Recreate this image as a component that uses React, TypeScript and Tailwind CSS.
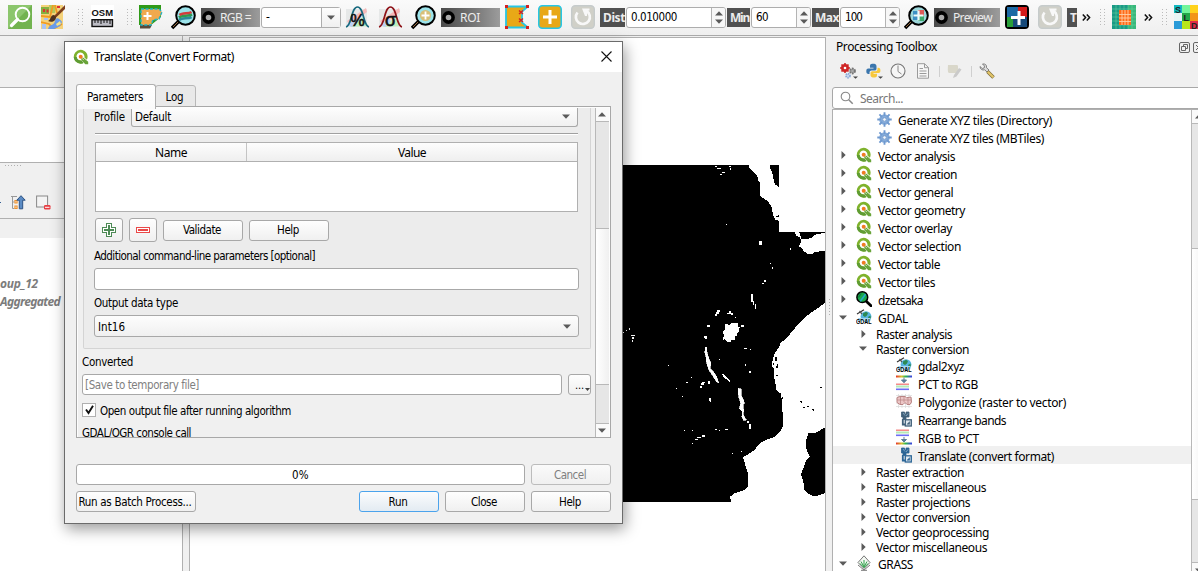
import { useLayoutEffect, useRef, useState, type ReactNode } from "react";

/* Text run spaced to a given advance width. */
function Txt({ w, children, className = "" }: { w: number; children: string; className?: string }) {
  const ref = useRef<HTMLSpanElement>(null);
  const [ls, setLs] = useState(0);
  useLayoutEffect(() => {
    if (ref.current) {
      const natural = ref.current.getBoundingClientRect().width - ls * children.length;
      setLs((w - natural) / children.length);
    }
  }, [w, children]);
  return (
    <span className={`inline-flex shrink-0 translate-y-px self-auto whitespace-pre ${className}`}>
      <span ref={ref} style={{ letterSpacing: ls }} className="inline-block shrink-0">
        {children}
      </span>
    </span>
  );
}

const SEGOE = "font-['Noto_Sans','Open_Sans',sans-serif] text-[12px]";
const TAHOMA = "font-['DejaVu_Sans_Condensed','DejaVu_Sans',sans-serif] text-[11.5px]";

function Down({ className = "" }: { className?: string }) {
  return (
    <svg width="8" height="5" viewBox="0 0 8 5" className={`shrink-0 ${className}`}>
      <path d="M0 .5h8L4 4.7z" fill="#5a5a5a" />
    </svg>
  );
}
function Up({ className = "" }: { className?: string }) {
  return (
    <svg width="8" height="5" viewBox="0 0 8 5" className={`shrink-0 ${className}`}>
      <path d="M0 4.5h8L4 .3z" fill="#5a5a5a" />
    </svg>
  );
}

function Chevrons({ className = "" }: { className?: string }) {
  return (
    <svg width="9" height="7" viewBox="0 0 9 7" className={`shrink-0 ${className}`}>
      <path d="M.8.5l2.800 3-2.800 3M4.800.5l2.800 3-2.800 3" fill="none" stroke="#111" strokeWidth="1.500" />
    </svg>
  );
}

function QIcon({ size = 16 }: { size?: number }) {
  return (
    <svg width={size} height={size} viewBox="0 0 16 16" className="shrink-0">
      <path d="M7.600 .8a6.900 6.900 0 1 0 2.900 13.200L8.400 11.500A4 4 0 1 1 11.400 8.400l2.500 2.300A6.900 6.900 0 0 0 7.600 .8z" fill="#7fb22c" />
      <path d="M.8 8a6.900 6.900 0 0 0 9.700 6L8.400 11.500A4 4 0 0 1 3.700 8z" fill="#5f9c33" />
      <path d="M8.300 8.800h2.200l4.700 4v2.400h-2.900L8.300 11z" fill="#69a43a" />
      <path d="M9 9.200l1.800 1.800" stroke="#d8e8c8" strokeWidth=".9" />
      <circle cx="7.700" cy="7.700" r="2" fill="#f07c22" />
    </svg>
  );
}

function GearIcon() {
  return (
    <svg width="15" height="15" viewBox="0 0 16 16" className="shrink-0">
      <circle cx="8" cy="8" r="3.800" fill="none" stroke="#85abd9" strokeWidth="3.600" />
      <path d="M8 .3v4M8 11.700v4M.3 8h4M11.700 8h4M2.600 2.600l2.800 2.800M10.600 10.600l2.800 2.800M13.400 2.600l-2.800 2.800M5.400 10.600l-2.800 2.800" stroke="#6f99cf" strokeWidth="2" />
      <circle cx="8" cy="8" r="1.900" fill="#f4f8fc" stroke="#5f8ac2" strokeWidth=".8" />
    </svg>
  );
}

function DzIcon() {
  return (
    <svg width="16" height="16" viewBox="0 0 16 16" className="shrink-0">
      <path d="M10.500 10.500L15 14.800" stroke="#000" strokeWidth="2.800" strokeLinecap="round" />
      <circle cx="6.300" cy="6.200" r="5.400" fill="#19a84a" stroke="#000" strokeWidth="1.500" />
      <path d="M3.500 10L9 2.500l1.300 1L5 10.700z" fill="#25a9c8" />
      <path d="M2.400 6.500L5.200 2.400" stroke="#0b7b3c" strokeWidth="1.300" />
    </svg>
  );
}

function GdalIcon() {
  return (
    <svg width="16" height="16" viewBox="0 0 16 16" className="shrink-0">
      <circle cx="10" cy="7.600" r="5.400" fill="#58b5e0" />
      <path d="M7 4.500l3-1.800 2 1.200-1 2.500-2 1.600-2-1.200zM12 8l2.500-1.500.4 3-2 1z" fill="#2d8a54" />
      <path d="M1 5L8 .8" stroke="#333" strokeWidth="1.200" />
      <path d="M3.500 2l2.500 3" stroke="#555" strokeWidth="1.200" />
      <path d="M2 9h12.500v3H2z" fill="#a5d7ee" />
      <text x="0" y="15.300" fontSize="7.500" fontWeight="bold" textLength="15.500" lengthAdjust="spacingAndGlyphs" fontFamily="Liberation Sans, sans-serif" fill="#000">GDAL</text>
    </svg>
  );
}

function PctIcon({ flip = false }: { flip?: boolean }) {
  return (
    <svg width="16" height="16" viewBox="0 0 16 16" className="shrink-0">
      <defs>
        <linearGradient id="rainbow">
          <stop offset="0" stopColor="#e8332a" />
          <stop offset=".35" stopColor="#d8c22c" />
          <stop offset=".6" stopColor="#2eb84a" />
          <stop offset="1" stopColor="#3b3bea" />
        </linearGradient>
      </defs>
      <rect x="0" y={flip ? 13.5 : 0.5} width="16" height="2" fill="url(#rainbow)" />
      <g transform={flip ? "translate(0 -8)" : undefined}>
        <rect y="8.500" width="13" height="1.500" fill="#f58a8a" />
        <rect y="10.500" width="13" height="2" fill="#b6eab6" />
        <rect y="13.500" width="13" height="1.600" fill="#6d6df5" />
      </g>
      <path d={flip ? "M8 8v3M5.500 10.500h5L8 13z" : "M8 2.500v3M5.500 5h5L8 7.800z"} fill="#5b7d99" stroke="#5b7d99" />
    </svg>
  );
}

function PolyIcon() {
  return (
    <svg width="16" height="14" viewBox="0 0 16 14" className="shrink-0">
      <path d="M0 1.500h16M0 5h16M0 9h16M0 12.500h16M2.500 0v14M6 0v14M9.500 0v14M13 0v14" stroke="#d8d8d8" strokeWidth=".7" />
      <path d="M1 3.500l3-1h5l1.500 1.200L15 3l.5 5-1.500 2.500h-3L9 8.500l-2 2H4L1 8.500z" fill="#ecc6c6" stroke="#b98484" strokeWidth="1" />
      <path d="M4.500 3v7M8 3v5M12 3.500v6.500M1 6h14" stroke="#b98484" strokeWidth=".7" />
    </svg>
  );
}

function TransIcon({ c = "#416079" }: { c?: string }) {
  return (
    <svg width="16" height="16" viewBox="0 0 16 16" className="shrink-0">
      <path d="M5.500 1h3v2h1.500v-2h3v5h-3v2.500h-3V6h-1.500z" fill={c} stroke={c} strokeWidth=".8" />
      <path d="M7 2l2 2.500M10 5l2-2.500" stroke="#8fb2cc" strokeWidth=".8" />
      <path d="M6.800 8v5.500h2.200" fill="none" stroke={c} strokeWidth="1.800" />
      <rect x="9.300" y="8.800" width="6" height="6.200" fill="#dfe8ef" stroke={c} strokeWidth="1.300" />
      <path d="M11 13.300l2.700-2.700v2.700z" fill={c} stroke={c} strokeWidth=".5" />
    </svg>
  );
}

function GrassIcon() {
  return (
    <svg width="14" height="16" viewBox="0 0 14 16" className="shrink-0">
      <path d="M7 .8L13 7.500 7 13.500 1 7.500z" fill="#f3f8f2" stroke="#777" strokeWidth="1" />
      <path d="M7 13V5M7 12L4 6.500M7 12l3-5.500M6.500 12L2.800 8.500M7.500 12l3.800-3.500" stroke="#2fa04a" strokeWidth="1" />
      <path d="M1 10l6 5 6-5M4 15.300h6" fill="none" stroke="#777" strokeWidth="1" />
    </svg>
  );
}

type Row = { t: string; w: number; lvl: 0 | 1 | 2; icon?: ReactNode; arrow?: "r" | "d"; sel?: boolean };
const rows: Row[] = [
  ...([["Vector analysis", 77], ["Vector creation", 79], ["Vector general", 75], ["Vector geometry", 87], ["Vector overlay", 74], ["Vector selection", 83], ["Vector table", 62], ["Vector tiles", 57]] as [string, number][]).map(
    ([t, w]): Row => ({ t, w, lvl: 0, icon: <QIcon />, arrow: "r" }),
  ),
  { t: "dzetsaka", w: 45, lvl: 0, icon: <DzIcon />, arrow: "r" },
  { t: "GDAL", w: 30, lvl: 0, icon: <GdalIcon />, arrow: "d" },
  { t: "Raster analysis", w: 76, lvl: 1, arrow: "r" },
  { t: "Raster conversion", w: 93, lvl: 1, arrow: "d" },
  { t: "gdal2xyz", w: 46, lvl: 2, icon: <GdalIcon /> },
  { t: "PCT to RGB", w: 60, lvl: 2, icon: <PctIcon /> },
  { t: "Polygonize (raster to vector)", w: 148, lvl: 2, icon: <PolyIcon /> },
  { t: "Rearrange bands", w: 88, lvl: 2, icon: <TransIcon /> },
  { t: "RGB to PCT", w: 61, lvl: 2, icon: <PctIcon flip /> },
  { t: "Translate (convert format)", w: 136, lvl: 2, icon: <TransIcon c="#2b6596" />, sel: true },
  { t: "Raster extraction", w: 88, lvl: 1, arrow: "r" },
  { t: "Raster miscellaneous", w: 110, lvl: 1, arrow: "r" },
  { t: "Raster projections", w: 94, lvl: 1, arrow: "r" },
  { t: "Vector conversion", w: 94, lvl: 1, arrow: "r" },
  { t: "Vector geoprocessing", w: 113, lvl: 1, arrow: "r" },
  { t: "Vector miscellaneous", w: 111, lvl: 1, arrow: "r" },
  { t: "GRASS", w: 35, lvl: 0, icon: <GrassIcon />, arrow: "d" },
];
const allRows: Row[] = [
  { t: "Generate XYZ tiles (Directory)", w: 154, lvl: 2, icon: <GearIcon /> },
  { t: "Generate XYZ tiles (MBTiles)", w: 146, lvl: 2, icon: <GearIcon /> },
  ...rows,
];

function TreeRow({ r, first }: { r: Row; first: boolean }) {
  const pad = first ? "pl-[43px]" : r.lvl === 0 ? "pl-[6px]" : r.lvl === 1 ? "pl-[26px]" : "pl-[63px]";
  return (
    <div className={`flex shrink-0 items-center ${r.lvl === 1 ? "h-[15px]" : "h-[18px]"} ${pad} ${r.sel ? "bg-[#f0f0f0]" : ""}`}>
      {r.arrow && (
        <span className="flex w-[8px] shrink-0 justify-center">
          {r.arrow === "r" ? (
            <svg width="5" height="8" viewBox="0 0 5 8"><path d="M.5 0v8L4.700 4z" fill="#5a5a5a" /></svg>
          ) : (
            <Down />
          )}
        </span>
      )}
      {r.icon && <span className={`flex w-[16px] shrink-0 justify-center ${r.lvl === 0 ? "ml-[9px]" : ""}`}>{r.icon}</span>}
      <Txt w={r.w} className={`${r.lvl === 1 ? "ml-[9px]" : "ml-[6px]"} leading-[15px]`}>{r.t}</Txt>
    </div>
  );
}

function Dots({ className = "" }: { className?: string }) {
  return (
    <svg width="5" height="17" viewBox="0 0 5 17" shapeRendering="crispEdges" className={`shrink-0 ${className}`}>
      <path d="M.5 0v17M4.500 0v17" stroke="#bbb" strokeWidth="1" strokeDasharray="1 2" />
    </svg>
  );
}

function Magnifier({ kind, className = "" }: { kind: "rgb" | "roi" | "prev"; className?: string }) {
  return (
    <svg width="25" height="25" viewBox="0 0 25 25" className={`shrink-0 ${className}`}>
      <path d="M8 16L1 23" stroke="#000" strokeWidth="3.600" />
      <path d="M8 16l-6 6" stroke="#9a6a3c" strokeWidth="1" />
      <circle cx="14.500" cy="10.500" r="9.300" fill={kind === "prev" ? "#9bd6da" : "#9ce3ea"} stroke="#000" strokeWidth="2" />
      {kind === "rgb" && (
        <g fill="none" strokeWidth="2.600">
          <path d="M8 15c3-2.500 9-1 12.500-3" stroke="#2c8a9c" />
          <path d="M8 12.500c3-2.500 9-1 13-3" stroke="#2f9a50" />
          <path d="M8.500 10c3-2.500 9-1 12-3" stroke="#d43c3c" />
        </g>
      )}
      {kind === "roi" && (
        <g>
          <circle cx="14.500" cy="10.500" r="5.500" fill="#d8c078" />
          <path d="M14.500 6.500v8M10.500 10.500h8" stroke="#fff" strokeWidth="1.800" />
        </g>
      )}
      {kind === "prev" && (
        <g>
          <path d="M9 6h5v9H9z" fill="#3d8fc4" />
          <path d="M14 5h6v6h-6z" fill="#dd5a58" />
          <path d="M14 11h6v5h-6z" fill="#3daa6c" />
          <path d="M14.500 5.500v10M9.500 10.500h10" stroke="#eefafa" strokeWidth="2.200" />
        </g>
      )}
    </svg>
  );
}

function DarkLabel({ children, width, tw }: { children: string; width: string; tw: number }) {
  return (
    <div className={`ml-[5px] flex h-[19px] shrink-0 items-center bg-gradient-to-r from-[#4a4a4a] to-[#9c9c9c] pl-px text-[#ececec] ${width}`}>
      <svg width="13" height="13" viewBox="0 0 13 13" className="shrink-0">
        <circle cx="6.500" cy="6.500" r="4.600" fill="#aaa" stroke="#000" strokeWidth="3.600" />
      </svg>
      <Txt w={tw} className="ml-[5px]">{children}</Txt>
    </div>
  );
}

function Spin({ value, tw, width }: { value: string; tw: number; width: string }) {
  return (
    <div className={`ml-px flex h-[21px] shrink-0 overflow-hidden rounded-[3px] border border-[#adadad] bg-white text-black ${width}`}>
      <div className={`flex flex-1 items-center pl-[4px] ${TAHOMA}`}><Txt w={tw}>{value}</Txt></div>
      <div className="flex w-[14px] flex-col items-center justify-center gap-[3px] border-l border-[#b4b4b4] bg-[#f7f7f7]">
        <Up />
        <Down />
      </div>
    </div>
  );
}

function Tag({ children, tw, className }: { children: string; tw: number; className: string }) {
  return (
    <div className={`flex h-[19px] shrink-0 items-center overflow-hidden bg-[#505050] pl-[3px] font-bold text-[#ececec] ${className}`}>
      <Txt w={tw}>{children}</Txt>
    </div>
  );
}

function Reload({ className = "" }: { className?: string }) {
  return (
    <svg width="24" height="24" viewBox="0 0 24 24" className={`shrink-0 ${className}`}>
      <rect x=".7" y=".7" width="22.600" height="22.600" rx="3.500" fill="#d0d0c8" stroke="#c6cbcb" strokeWidth="1.400" />
      <path d="M6.500 7.500a7 7 0 1 0 9-1.500" fill="none" stroke="#f8f8f8" strokeWidth="2.700" />
      <path d="M11 3.500h7.500v2L16 6v5h-2z" fill="#f8f8f8" />
    </svg>
  );
}

function Bell({ sign }: { sign: "%" | "σ" }) {
  const c = sign === "%" ? "#17697e" : "#8e1218";
  return (
    <svg width="25" height="24" viewBox="0 0 25 24" className="shrink-0">
      <path d="M1 4h21v18H1z" fill="#e6e8e8" />
      <path d="M2 16L21 3l1 4L5 20z" fill="#f5b9b9" />
      <path d="M5 22l13-10 5 9z" fill="#bdeebd" />
      <path d="M2 20l8-7 3 3-6 6z" fill="#bcd0f5" />
      <path d="M1 22C7 21 6 2 12.500 2S18 21 24 22" fill="none" stroke={c} strokeWidth="1.700" />
      <text x="12.500" y="21" textAnchor="middle" fontSize={sign === "%" ? 16 : 18} stroke="#111" strokeWidth=".6" fontFamily="Liberation Sans, sans-serif" fill="#111">{sign}</text>
    </svg>
  );
}

function Toolbar() {
  return (
    <div className={`flex h-[36px] shrink-0 items-center overflow-hidden border-b border-[#a9a9a9] bg-gradient-to-b from-[#fafafa] to-[#efefef] pb-px ${SEGOE}`}>
      <svg width="24" height="24" viewBox="0 0 24 24" className="ml-[8px] shrink-0">
        <rect width="24" height="24" fill="#72b34f" />
        <path d="M0 0h24L0 24z" fill="#8cc66d" />
        <circle cx="14.500" cy="9.500" r="6.800" fill="none" stroke="#fff" strokeWidth="1.900" />
        <path d="M9.500 14.500L3.500 20.500" stroke="#fff" strokeWidth="3.200" strokeLinecap="round" />
      </svg>
      <svg width="24" height="24" viewBox="0 0 24 24" className="ml-[9px] shrink-0">
        <rect width="22" height="24" fill="#f4d27a" />
        <path d="M0 2h8v7H0z" fill="#85b040" />
        <path d="M8 0h6v8H9z" fill="#b3c95a" />
        <path d="M2 4h2v3H2zM5.500 4.500h2v3h-2zM16 1h3v2h-3z" fill="#d33" />
        <path d="M0 11l9 1 3-12M0 17l8 2 5 5M12 24l9-5M14 0l2 8" stroke="#f09a22" strokeWidth="1.800" fill="none" />
        <path d="M7 24c1-5 6-3 7-8s5-2 7 1l-2 4-6 3z" fill="#6a9be8" />
        <path d="M1 19h4v5H1zM3 13h4v2H3z" fill="#a9c3f2" />
        <path d="M15 19l4-3 1 3-4 2z" fill="#f4e38a" />
        <path d="M24 0L12 12l2 1.500L24 4z" fill="#7d3f1c" />
        <path d="M13 10c-4 0-3 5-6 6 4 2 8 0 8-4z" fill="#4d321f" />
      </svg>
      <Dots className="ml-[13px]" />
      <svg width="23" height="24" viewBox="0 0 23 24" className="ml-[8px] shrink-0">
        <rect width="23" height="24" fill="#fff" />
        <text x=".5" y="10.500" fontSize="9.500" fontWeight="bold" textLength="21.500" lengthAdjust="spacingAndGlyphs" fontFamily="Liberation Sans, sans-serif" fill="#111">OSM</text>
        <rect x="1" y="14.700" width="20.500" height="6.800" fill="#bcbcc4" stroke="#111" strokeWidth="1.400" />
        <path d="M4 15v3M7 15v3M10 15v4M13 15v3M16 15v3M19 15v4" stroke="#111" />
      </svg>
      <Dots className="ml-[13px]" />
      <svg width="24" height="24" viewBox="0 0 24 24" className="ml-[7px] shrink-0">
        <path d="M0 0h22v12L12 20H0z" fill="#2f9a17" />
        <path d="M1 20h12l-2 3.500H1z" fill="#5a4a3a" />
        <path d="M2 4h18l3 3-3 7-6 1-2 5H2z" fill="#f0a94e" stroke="#20b4c8" strokeWidth="1.400" strokeDasharray="3 1.500" />
        <path d="M8.500 7v8M4.500 11h8" stroke="#fff" strokeWidth="2" />
      </svg>
      <Magnifier kind="rgb" className="ml-[8px]" />
      <DarkLabel width="w-[59px]" tw={31}>RGB =</DarkLabel>
      <div className="ml-px flex h-[21px] w-[80px] shrink-0 items-center rounded-[3px] border border-[#adadad] bg-white text-black">
        <span className="flex-1 pl-[4px]">-</span>
        <span className="flex h-full w-[19px] items-center justify-center border-l border-[#adadad] bg-gradient-to-b from-[#fdfdfd] to-[#f0f0f0]"><Down /></span>
      </div>
      <span className="ml-[4px] flex shrink-0"><Bell sign="%" /></span>
      <span className="ml-[8px] flex shrink-0"><Bell sign="σ" /></span>
      <Magnifier kind="roi" className="ml-[8px]" />
      <DarkLabel width="w-[59px]" tw={20}>ROI</DarkLabel>
      <svg width="24" height="24" viewBox="0 0 24 24" className="ml-[5px] shrink-0">
        <path d="M1 1.500h22l-6 5v11l6 5H1z" fill="#e8a817" stroke="#26c6e6" strokeWidth="1.800" />
        <path d="M0 0h3v3H0zM0 21h3v3H0zM21 0h3v3h-3zM21 21h3v3h-3z" fill="#d42020" />
        <path d="M14 5.500l4 3.500M18 5.500l-4 3.500M14 13.500l4 3.500M18 13.500l-4 3.500" stroke="#d42020" strokeWidth="1.500" />
      </svg>
      <svg width="24" height="24" viewBox="0 0 24 24" className="ml-[9px] shrink-0">
        <rect x=".8" y=".8" width="22.400" height="22.400" rx="3.500" fill="#e8a817" stroke="#26c6e6" strokeWidth="1.600" />
        <path d="M12 5v14M5 12h14" stroke="#fff" strokeWidth="3" />
      </svg>
      <Reload className="ml-[9px]" />
      <Tag className="ml-[5px] w-[25px]" tw={22}>Dist</Tag>
      <Spin value="0.010000" tw={46} width="w-[100px]" />
      <Tag className="ml-px w-[23px]" tw={19}>Min</Tag>
      <Spin value="60" tw={12} width="w-[60px]" />
      <Tag className="ml-px w-[27px]" tw={24}>Max</Tag>
      <Spin value="100" tw={17} width="w-[60px]" />
      <Magnifier kind="prev" className="ml-[4px]" />
      <DarkLabel width="w-[66px]" tw={39}>Preview</DarkLabel>
      <svg width="24" height="24" viewBox="0 0 24 24" className="ml-[5px] shrink-0">
        <rect x="1" y="1" width="22" height="22" rx="3" fill="#0d8a5a" stroke="#000" strokeWidth="2" />
        <path d="M2 2h11v10H2z" fill="#1d6aa5" />
        <path d="M13 2h9v10h-9z" fill="#d41c1c" />
        <path d="M2 12h6v10H2z" fill="#2aa03a" />
        <path d="M8 12h14v10H8z" fill="#174a7a" />
        <path d="M14 6v14M6 12.500h14" stroke="#fff" strokeWidth="3" />
      </svg>
      <Reload className="ml-[9px]" />
      <Tag className="ml-[5px] w-[10px]" tw={7}>T</Tag>
      <Chevrons className="ml-[5px]" />
      <Dots className="ml-[9px]" />
      <svg width="24" height="24" viewBox="0 0 24 24" className="ml-[7px] shrink-0">
        <rect width="24" height="24" fill="#1a9a86" />
        <path d="M16 0h8v24h-8z" fill="#38b87c" />
        <path d="M0 4h24M0 8h24M0 12h24M0 16h24M0 20h24M4 0v24M8 0v24M12 0v24M16 0v24M20 0v24" stroke="#71d69c" strokeWidth=".5" />
        <path d="M7 5h12v15H7z" fill="#ff6b18" />
        <path d="M7 9.500h12M7 13h12M7 16.500h12M10 5v15M13 5v15M16 5v15" stroke="#ffd0a8" strokeWidth=".9" />
      </svg>
      <Chevrons className="ml-[8px]" />
      <Dots className="ml-[9px]" />
      <svg width="24" height="24" viewBox="0 0 24 24" className="ml-[7px] shrink-0">
        <path d="M0 0h8v8H0z" fill="#10b8c0" />
        <path d="M8 0h8v8H8z" fill="#72f59a" />
        <path d="M16 0h8v8h-8z" fill="#ffd21c" />
        <path d="M0 8h8v8H0z" fill="#e8f4f4" />
        <path d="M8 8h8v8H8z" fill="#22a848" />
        <path d="M16 8h8v8h-8z" fill="#f29418" />
        <path d="M0 16h8v8H0z" fill="#2a9ad8" />
        <path d="M8 16h8v8H8z" fill="#b8e61c" />
        <path d="M16 16h8v8h-8z" fill="#e02848" />
        <g fontSize="9" fontWeight="bold" fontFamily="Liberation Sans, sans-serif" fill="#222">
          <text x="1" y="7.500">S</text>
          <text x="9.500" y="15.500">L</text>
          <text x="17" y="23.500">D</text>
        </g>
      </svg>
    </div>
  );
}

const SPECKS: [number, number, number, number][] = [
  [285, 48, 5, 3], [292, 54, 12, 3], [326, 48, 6, 3], [329, 54, 5, 5], [307, 67, 8, 3], [300, 73, 6, 3],
  [319, 222, 3, 3], [418, 274, 9, 10], [510, 294, 3, 6], [450, 339, 3, 3], [456, 351, 3, 6], [433, 391, 4, 6], [427, 399, 5, 4],
  [393, 432, 5, 24], [398, 454, 4, 12], [404, 462, 4, 16], [292, 480, 9, 6], [288, 486, 8, 6], [284, 492, 7, 6],
  [322, 490, 6, 3], [328, 484, 6, 9], [334, 490, 5, 4], [345, 502, 3, 3], [262, 526, 9, 5], [254, 558, 6, 9], [256, 592, 4, 8],
  [363, 526, 8, 4], [375, 594, 6, 3], [390, 596, 3, 4], [252, 558, 7, 7], [33, 555, 12, 3], [37, 561, 4, 5], [36, 570, 3, 5],
  [28, 535, 3, 5], [18, 541, 3, 3], [10, 547, 3, 3],
  [372, 594, 9, 4], [390, 598, 3, 3], [375, 642, 4, 5], [388, 664, 5, 4], [144, 644, 3, 3], [297, 627, 3, 3], [264, 694, 5, 9],
  [247, 696, 9, 4], [243, 700, 10, 6], [240, 707, 7, 6], [197, 695, 6, 3], [213, 681, 3, 3], [169, 715, 3, 3], [186, 738, 3, 3],
  [267, 744, 5, 9], [270, 752, 3, 4], [193, 840, 3, 3], [217, 840, 3, 3], [286, 838, 4, 3], [297, 840, 4, 3], [315, 837, 9, 3],
  [245, 856, 9, 5], [232, 861, 12, 4], [225, 866, 8, 4], [217, 879, 3, 3], [336, 909, 3, 3], [364, 903, 3, 3], [382, 812, 4, 8], [388, 822, 5, 14],
];

function MapCanvas() {
  return (
    <svg width="635" height="533" viewBox="190 38 635 533" shapeRendering="crispEdges" className="block">
      <path d="M600 165H779V232H825V501.500H600z" fill="#000" />
      <g transform="translate(620 150) scale(.33333)" fill="#fff">
        <path d="M385 44L388 55 397 62 410 74 417 97 421 97 421 138 445 155 455 172 459 195 467 210 472 210 477 214 477 112 465 103 460 85 457 68 452 60 448 44z" />
        <path d="M469 199h5v-3h4v6h-8z" fill="#000" />
        <path d="M523 246L528 256 541 264 544 275 538 286 529 288 543 291 551 303 562 311 578 311 585 306 602 304 616 304 616 249 590 252 578 260 574 265 544 267 538 246z" />
        <path d="M616 458L590 477 565 494 546 512 530 528 510 552 495 570 482 577 478 590 472 598 464 612 458 630 455 645 463 660 462 680 466 700 470 722 484 732 486 775 490 800 488 830 480 845 464 861 440 869 420 880 402 901 385 912 369 922 376 945 385 975 383 1010 370 1022 345 1029 330 1040 333 1056 616 1056z" />
        <path d="M616 832L602 840 585 849 565 849 557 875 560 900 570 920 558 933 550 955 543 972 550 995 553 1018 565 1032 585 1040 616 1029z" fill="#000" />
        <path d="M316 522L328 524 334 519 355 519 353 528 359 532 357 545 351 550 350 558 345 560 344 568 349 571 335 570 331 576 318 574 315 568 308 569 312 558 309 546 314 538z" />
        <path d="M258 592L262 610 266 624 273 640 270 654 280 665 290 680 296 698 289 695 279 678 267 660 260 640 258 620 254 605z" stroke="#fff" strokeWidth="2" />
        <path d="M306 670L314 676 332 694 327 695 310 680z" />
        <path d="M354 714L364 718 363 735 371 752 374 760 369 765 371 780 370 795 379 810 371 812 366 800 367 785 358 775 362 760 356 740z" stroke="#fff" strokeWidth="2" />
        {SPECKS.map(([x, y, w, h], i) => <rect key={i} x={x} y={y} width={w} height={h} />)}
        <path d="M464 622h7v12h-5zM470 643h4v10h-5zM458 638h4v6h-4zM468 675h6v4h-6zM486 742h4v6h-4zM541 754h5v6h-3zM549 770h6v4h-6zM562 768h5v4h-5zM576 776h5v7h-3zM600 711h6v3h-6z" fill="#000" />
      </g>
    </svg>
  );
}

function Btn({ label, w, className = "" }: { label: string; w: number; className?: string }) {
  return (
    <div className={`flex h-[21px] shrink-0 items-center justify-center rounded-[3px] border bg-gradient-to-b pr-[2px] ${className || "w-[80px] border-[#a8a8a8] from-[#fefefe] to-[#f0f0f0]"}`}>
      <Txt w={w}>{label}</Txt>
    </div>
  );
}

function Dialog() {
  return (
    <div className={`absolute left-[64px] top-[41px] flex h-[483px] w-[559px] flex-col border border-[#6b6b6b] bg-[#f0f0f0] text-black shadow-[2px_5px_14px_rgba(0,0,0,0.4)] ${TAHOMA}`}>
      <div className={`flex h-[30px] shrink-0 items-center bg-white pb-px pl-[8px] ${SEGOE}`}>
        <QIcon />
        <Txt w={140} className="mb-[2px] ml-[5px]">Translate (Convert Format)</Txt>
        <svg width="11" height="11" viewBox="0 0 11 11" className="ml-auto mr-[10px]">
          <path d="M.5.5l10 10M10.500.5l-10 10" stroke="#111" strokeWidth="1.100" />
        </svg>
      </div>
      <div className="ml-[11px] mt-[11px] flex h-[24px] shrink-0 items-end">
        <div className="relative z-10 mb-[-2px] flex h-[25px] w-[80px] justify-center rounded-t-[3px] border border-b-0 border-[#b0b0b0] bg-gradient-to-b from-white to-[#fafafa] pr-[2px] pt-[3px]"><Txt w={56}>Parameters</Txt></div>
        <div className="-ml-px flex h-[22px] w-[41px] justify-center rounded-t-[3px] border border-[#b8b8b8] bg-[#e9e9e9] pr-[2px] pt-[2px]"><Txt w={18}>Log</Txt></div>
      </div>
      <div className="ml-[11px] mt-[-1px] flex h-[332px] w-[535px] shrink-0 overflow-hidden border border-[#a8a8a8] bg-[#fdfdfd] pb-0 pl-px pr-px pt-px">
        <div className="flex flex-1 flex-col overflow-hidden bg-[#f0f0f0]">
          <div className="ml-[5px] flex h-[241px] w-[508px] shrink-0 flex-col rounded-b-[2px] border border-t-0 border-[#d4d4d4] bg-[#ececec] pl-[10px]">
            <div className="flex h-[19px] shrink-0">
              <Txt w={31} className="mt-px leading-[14px]">Profile</Txt>
              <div className="ml-[6px] flex w-[447px] items-center rounded-b-[3px] border border-t-0 border-[#a8a8a8] bg-gradient-to-b from-[#fdfdfd] to-[#f0f0f0] pb-px pl-[3px] pr-[7px]">
                <Txt w={36}>Default</Txt>
                <Down className="ml-auto" />
              </div>
            </div>
            <div className="ml-px mt-[6px] h-[2px] w-[483px] shrink-0 border-b border-white bg-[#a0a0a0]" />
            <div className={`ml-px mt-[7px] flex h-[70px] w-[483px] shrink-0 flex-col border border-[#b0b0b0] bg-white ${SEGOE}`}>
              <div className="flex h-[19px] shrink-0 border-b border-[#b0b0b0] bg-gradient-to-b from-[#fdfdfd] to-[#efefef]">
                <div className="flex w-[151px] items-center justify-center border-r border-[#c4c4c4]"><Txt w={32}>Name</Txt></div>
                <div className="flex flex-1 items-center justify-center"><Txt w={28}>Value</Txt></div>
              </div>
            </div>
            <div className="ml-px mt-[6px] flex h-[24px] shrink-0 items-center">
              <div className="flex h-[24px] w-[28px] items-center justify-center rounded-[3px] border border-[#a8a8a8] bg-gradient-to-b from-[#fefefe] to-[#f0f0f0]">
                <svg width="14" height="14" viewBox="0 0 14 14" shapeRendering="crispEdges">
                  <path d="M4.500.5h5v4h4v5h-4v4h-5v-4h-4v-5h4z" fill="#fff" stroke="#4d8a55" />
                  <path d="M7 2v10M2 7h10" stroke="#4d8a55" strokeWidth="2" />
                </svg>
              </div>
              <div className="ml-[6px] flex h-[24px] w-[28px] items-center justify-center rounded-[3px] border border-[#a8a8a8] bg-gradient-to-b from-[#fefefe] to-[#f0f0f0]">
                <svg width="14" height="6" viewBox="0 0 14 6" shapeRendering="crispEdges">
                  <path d="M.5.5h13v5H.5z" fill="#fff" stroke="#ea4848" />
                  <path d="M2 3h10" stroke="#ea4848" strokeWidth="2" />
                </svg>
              </div>
              <div className="ml-[6px]"><Btn label="Validate" w={38} /></div>
              <div className="ml-[6px]"><Btn label="Help" w={22} /></div>
            </div>
            <Txt w={221} className="mt-[6px] leading-[14px]">Additional command-line parameters [optional]</Txt>
            <div className="mt-[6px] h-[22px] w-[485px] shrink-0 rounded-[3px] border border-[#a8a8a8] bg-white" />
            <Txt w={84} className="mt-[5px] leading-[14px]">Output data type</Txt>
            <div className="mt-[6px] flex h-[22px] w-[485px] shrink-0 items-center rounded-[3px] border border-[#a8a8a8] bg-gradient-to-b from-[#fdfdfd] to-[#f0f0f0] pl-[3px] pr-[7px]">
              <Txt w={27} className="mt-px">Int16</Txt>
              <Down className="ml-auto" />
            </div>
          </div>
          <Txt w={51} className="ml-[4px] mt-[5px] leading-[14px]">Converted</Txt>
          <div className="ml-[4px] mt-[6px] flex h-[21px] shrink-0">
            <div className="flex w-[480px] items-center rounded-[3px] border border-[#a8a8a8] bg-white pl-[2px] text-[#7f7f7f]"><Txt w={114}>[Save to temporary file]</Txt></div>
            <div className="ml-[6px] flex w-[23px] items-end rounded-[3px] border border-[#a8a8a8] bg-gradient-to-b from-[#fefefe] to-[#f0f0f0] pb-[3px] pl-[6px]">
              <span className="w-[9px] text-[11px] leading-[12px]"><Txt w={9}>...</Txt></span>
              <svg width="5" height="3" viewBox="0 0 5 3" className="ml-px"><path d="M0 0h5L2.500 3z" fill="#444" /></svg>
            </div>
          </div>
          <div className="ml-[4px] mt-[8px] flex h-[14px] shrink-0 items-center">
            <span className="flex h-[14px] w-[14px] items-center justify-center border border-[#b0b0b0] bg-white">
              <svg width="9" height="10" viewBox="0 0 9 10"><path d="M1 4.500L3.500 8 8 .8" fill="none" stroke="#111" strokeWidth="1.900" /></svg>
            </span>
            <Txt w={191} className="ml-[4px] mt-[2px]">Open output file after running algorithm</Txt>
          </div>
          <Txt w={109} className="ml-[4px] mt-[8px] leading-[14px]">GDAL/OGR console call</Txt>
        </div>
        <div className="flex w-[14px] shrink-0 flex-col border-l border-[#b8b8b8] bg-[#e6e6e6]">
          <div className="flex h-[14px] shrink-0 items-center justify-center border-b border-[#b8b8b8] bg-[#fafafa] pr-px"><Up /></div>
          <div className="mt-[106px] h-[157px] shrink-0 border-y border-[#b8b8b8] bg-gradient-to-r from-white to-[#f0f0f0]" />
          <div className="mt-[38px] flex flex-1 items-center justify-center border-t border-[#b8b8b8] bg-[#fafafa] pr-px"><Down /></div>
        </div>
      </div>
      <div className="ml-[11px] mt-[26px] flex h-[21px] shrink-0">
        <div className="flex w-[449px] items-center justify-center rounded-[3px] border border-[#a8a8a8] bg-white"><Txt w={17}>0%</Txt></div>
        <div className="ml-[6px] text-[#7f7f7f]"><Btn label="Cancel" w={32} className="w-[80px] border-[#bcbcbc] from-[#fafafa] to-[#f0f0f0]" /></div>
      </div>
      <div className="ml-[11px] mt-[6px] flex h-[21px] shrink-0">
        <Btn label="Run as Batch Process..." w={113} className="w-[120px] border-[#a8a8a8] from-[#fefefe] to-[#f0f0f0]" />
        <div className="ml-[163px] flex gap-[6px]">
          <Btn label="Run" w={19} className="w-[80px] border-[#4ba3ec] from-[#fbfcfd] to-[#e3ebf2]" />
          <Btn label="Close" w={26} />
          <Btn label="Help" w={22} />
        </div>
      </div>
    </div>
  );
}

function LeftPanel() {
  return (
    <div className="flex w-[183px] shrink-0 flex-col border-r border-[#b0b0b0]">
      <div className="h-[51px] shrink-0" />
      <div className="h-[76px] shrink-0 border-y border-[#b0b0b0] bg-white" />
      <div className="flex h-[57px] shrink-0 flex-col">
        <svg width="17" height="1" viewBox="0 0 17 1" className="ml-[5px] mt-[2px] shrink-0"><path d="M0 .5h17" stroke="#b0b0b0" strokeDasharray="1 2" /></svg>
        <div className="mt-[29px] flex items-center">
          <span className="h-px w-px bg-[#345f94]" />
          <svg width="15" height="15" viewBox="0 0 15 15" className="ml-[10px]">
            <path d="M0 1.500h6M1.500 1.500v12h2M1.500 7h2" fill="none" stroke="#999" />
            <path d="M4 5.500h2v2.500H4zM4 11h2v2.500H4z" fill="#fff" stroke="#f0912a" strokeWidth="1.200" />
            <path d="M10 .7l4.200 4.500h-2.500v8.600H8.300V5.200H5.800z" fill="#5b8bc4" stroke="#2d5283" />
          </svg>
          <svg width="15" height="15" viewBox="0 0 15 15" className="ml-[10px]">
            <rect x=".6" y="1" width="11" height="11" fill="#f4f4f4" stroke="#888" />
            <rect x="8" y="10" width="6.500" height="4.500" rx="1.200" fill="#e83f44" />
            <path d="M9 12.300h4.500" stroke="#fff" />
          </svg>
        </div>
      </div>
      <div className="mt-[-2px] h-[20px] shrink-0 border-t border-[#b0b0b0]" />
      <div className="flex flex-1 flex-col bg-white pt-[36px] font-['Noto_Sans',sans-serif] text-[12px] font-bold italic text-[#7c7c7c]">
        <span className="flex h-[18px] items-center"><Txt w={38}>oup_12</Txt></span>
        <span className="flex h-[18px] items-center"><Txt w={60}>Aggregated</Txt></span>
      </div>
    </div>
  );
}

function Toolbox() {
  return (
    <div className={`flex w-[366px] shrink-0 flex-col overflow-hidden text-black ${SEGOE}`}>
      <div className="flex h-[22px] shrink-0 items-center pl-[4px]">
        <Txt w={101} className="mt-[-2px] leading-[16px]">Processing Toolbox</Txt>
        <svg width="19" height="11" viewBox="0 0 19 11" className="ml-auto">
          <rect x=".5" y=".5" width="10" height="10" rx="1.500" fill="none" stroke="#666" />
          <path d="M4.500 4V2.500h4v4H7M2.500 4.500h4v4h-4z" fill="none" stroke="#666" />
          <rect x="14.500" y=".5" width="10" height="10" rx="1.500" fill="none" stroke="#666" />
          <path d="M17 3l5 5M17 8l5-5" stroke="#666" />
        </svg>
      </div>
      <div className="flex h-[28px] shrink-0 items-center pb-[2px] pl-[8px]">
        <svg width="18" height="16" viewBox="0 0 18 16" className="shrink-0">
          <circle cx="5" cy="5" r="2.700" fill="none" stroke="#cf2626" strokeWidth="2.600" />
          <path d="M5 0v10M0 5h10M1.500 1.500l7 7M8.500 1.500l-7 7" stroke="#cf2626" strokeWidth="1.600" />
          <circle cx="12.500" cy="8" r="2.400" fill="#aaa" stroke="#777" strokeWidth="2" strokeDasharray="1.600 .8" />
          <circle cx="8" cy="12.700" r="2" fill="#c7d8ef" stroke="#8baad8" strokeWidth="1.800" strokeDasharray="1.400 .7" />
          <circle cx="5" cy="5" r="1.300" fill="#fff" />
          <path d="M13 13.500h5l-2.500 2.300z" fill="#444" />
        </svg>
        <svg width="17" height="16" viewBox="0 0 17 16" className="ml-[8px] shrink-0">
          <path d="M7 .8c-3 0-3 1.200-3 3v1h3.500v.8H2.500C.6 5.600.3 7 .3 8.300c0 1.800.7 2.800 2.200 2.800h1V9.500c0-1.200 1-2 2-2h3.200c1 0 1.800-.8 1.800-1.800V3.500C10.500 1.300 9 .8 7 .8z" fill="#3b76ad" />
          <path d="M8 14.500c3 0 3-1.200 3-3v-.8H7.500V10h5c1.600 0 1.900-1.400 1.900-2.600 0-1.700-.7-2.600-2-2.600h-.9v1.500c0 1.200-1 2-2 2H6.300c-1 0-1.800.8-1.800 1.800v2.100c0 1.800 1.500 2.300 3.500 2.300z" fill="#f7c83c" />
          <path d="M12 13.500h5l-2.500 2.300z" fill="#444" />
        </svg>
        <svg width="16" height="16" viewBox="0 0 16 16" className="ml-[7px] shrink-0">
          <circle cx="8" cy="8" r="7" fill="#f6f6f6" stroke="#777" strokeWidth="1.100" />
          <path d="M8 2.500V8.500l3.500 2.500" fill="none" stroke="#888" />
        </svg>
        <svg width="14" height="16" viewBox="0 0 14 16" className="ml-[10px] shrink-0">
          <path d="M1.500.7h7L12.500 4.500v10.700h-11z" fill="#f6f6f6" stroke="#9a9a9a" />
          <path d="M8.500.7v4h4M3.500 5.500h3.500M3.500 8h7M3.500 10.500h7M3.500 13h7" fill="none" stroke="#9a9a9a" />
        </svg>
        <span className="ml-[9px] h-[11px] w-px bg-[#cfcfcf]" />
        <svg width="15" height="15" viewBox="0 0 15 15" className="ml-[7px] shrink-0">
          <path d="M1 1h9c1 0 1 1 1 2v6H2.500C1 9 .5 8 1 1z" fill="#d9d7ca" />
          <path d="M6 14l1-3 5-7 2.500 1.500-5 7z" fill="#cacaca" />
        </svg>
        <span className="ml-[9px] h-[11px] w-px bg-[#cfcfcf]" />
        <svg width="16" height="16" viewBox="0 0 16 16" className="ml-[7px] shrink-0">
          <path d="M1 3.500l2.200 2 2-.5.300-2L3.500 1c2.500-.5 4.500.8 4 3.700L10 7 8 9 5.700 6.800C3.500 7.500 1 6.500 1 3.500z" fill="#dcdcdc" stroke="#777" strokeWidth=".9" />
          <path d="M8.500 8.500l6 6" stroke="#7e6e38" strokeWidth="3.600" />
          <path d="M8.800 8.800l5.500 5.500" stroke="#e3c569" strokeWidth="2.200" />
        </svg>
      </div>
      <div className="mt-px flex h-[22px] w-[372px] shrink-0 items-center rounded-[3px] border border-[#a8a8a8] bg-white pl-[7px] text-[#777]">
        <svg width="14" height="14" viewBox="0 0 14 14" className="shrink-0">
          <circle cx="5.500" cy="5.500" r="4.300" fill="none" stroke="#888" strokeWidth="1.100" />
          <path d="M8.700 8.700l4 4" stroke="#888" strokeWidth="1.500" />
        </svg>
        <Txt w={43} className="ml-[6px]">Search...</Txt>
      </div>
      <div className="flex flex-1 overflow-hidden border-l border-t border-[#b0b0b0] bg-white">
        <div className="flex w-[358px] shrink-0 flex-col overflow-hidden">
          {allRows.map((r, i) => <TreeRow key={i} r={r} first={i < 2} />)}
        </div>
        <div className="flex w-[15px] shrink-0 flex-col border-l border-[#b8b8b8] bg-[#e6e6e6]">
          <div className="flex h-[14px] shrink-0 items-center justify-center border-b border-[#b8b8b8] bg-[#fafafa]"><Up /></div>
          <div className="mt-[124px] h-[252px] shrink-0 border-y border-[#b8b8b8] bg-gradient-to-r from-white to-[#f0f0f0]" />
          <div className="mt-[62px] flex flex-1 items-start justify-center border-t border-[#b8b8b8] bg-[#fafafa] pt-[5px]"><Down /></div>
        </div>
      </div>
    </div>
  );
}

export default function App() {
  return (
    <div className="relative flex h-[571px] w-[1198px] flex-col overflow-hidden bg-[#f0f0f0]">
      <Toolbar />
      <div className="flex min-h-0 flex-1">
        <LeftPanel />
        <div className="ml-[6px] mt-px h-[534px] w-[637px] shrink-0 border border-b-0 border-[#b0b0b0] bg-white">
          <MapCanvas />
        </div>
        <div className="flex w-[6px] shrink-0 items-center justify-center">
          <svg width="1" height="17" viewBox="0 0 1 17" className="mt-[8px]"><path d="M.5 0v17" stroke="#b0b0b0" strokeDasharray="1 2" /></svg>
        </div>
        <Toolbox />
      </div>
      <Dialog />
    </div>
  );
}
